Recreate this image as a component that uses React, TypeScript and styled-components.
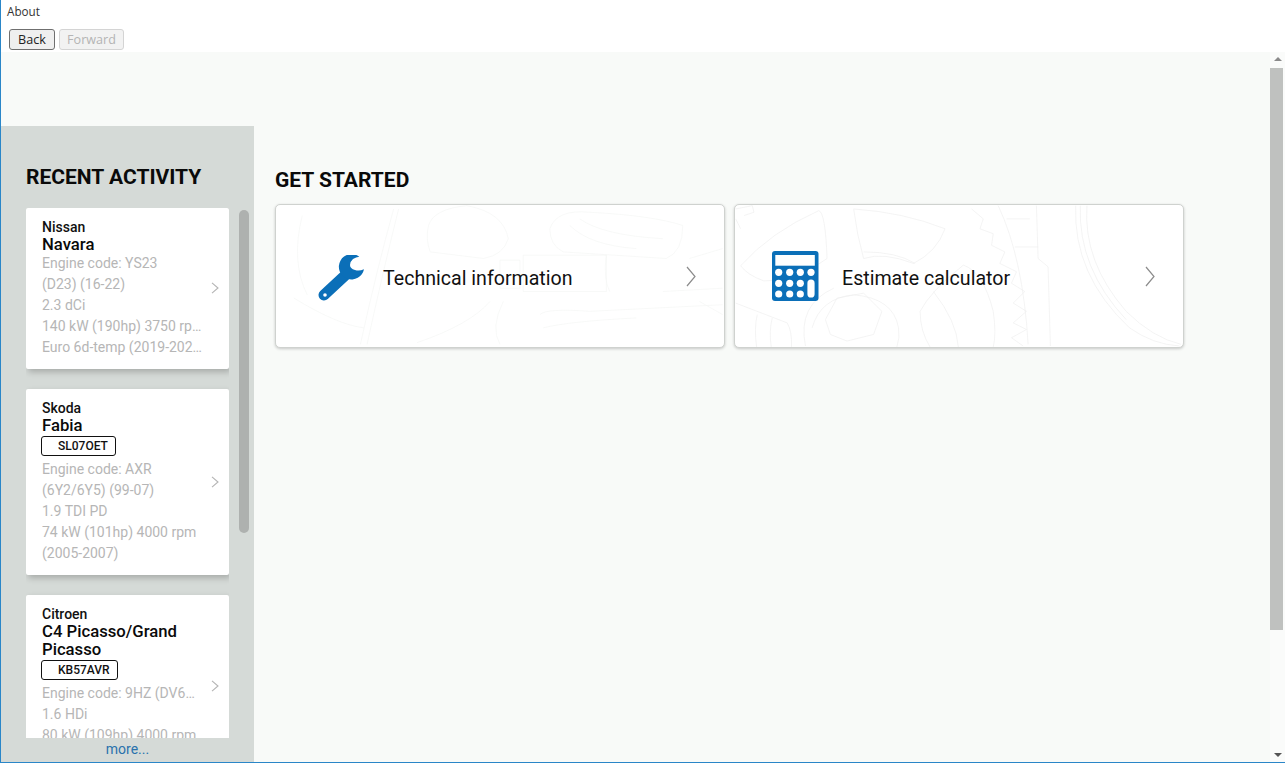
import React from 'react';
import styled, { createGlobalStyle } from 'styled-components';

const GlobalStyle = createGlobalStyle`
    html, body {
        margin: 0;
        padding: 0;
        background: #fff;
    }
    * {
        box-sizing: border-box;
    }
`;

const Window = styled.div`
    width: 1285px;
    height: 763px;
    display: flex;
    flex-direction: column;
    overflow: hidden;
    border-left: 1px solid #2a86c8;
    border-bottom: 1px solid #2a86c8;
    font-family: Roboto, "Liberation Sans", sans-serif;
`;

const TopBar = styled.div`
    height: 52px;
    flex: none;
    background: #fff;
    padding: 4px 0 0 6px;
    font-family: "Open Sans", "Liberation Sans", sans-serif;
`;

const MenuLabel = styled.div`
    font-size: 11.7px;
    line-height: 14px;
    color: #333;
`;

const NavRow = styled.div`
    display: flex;
    gap: 4px;
    margin: 11px 0 0 2px;
`;

const NavButton = styled.button<{ $width: number }>`
    width: ${props => props.$width}px;
    height: 21px;
    padding: 0;
    font-family: inherit;
    font-size: 12.6px;
    line-height: 17px;
    border-radius: 3px;
    border: 1px solid ${props => (props.disabled ? '#d4d4d4' : '#6f6f6f')};
    background: ${props => (props.disabled ? '#f2f2f2' : '#efefef')};
    color: ${props => (props.disabled ? '#b4b4b4' : '#222')};
`;

const Body = styled.div`
    flex: 1;
    min-height: 0;
    display: flex;
    background: #f8faf8;
`;

const Page = styled.div`
    flex: 1;
    min-width: 0;
    display: flex;
    padding-top: 74px;
`;

const Sidebar = styled.aside`
    width: 253px;
    flex: none;
    display: flex;
    flex-direction: column;
    background: #d5dad7;
    padding: 39px 0 0 25px;
`;

const Heading = styled.h2`
    margin: 0;
    font-size: 21px;
    line-height: 24px;
    font-weight: 700;
    color: #0a0a0a;
    white-space: nowrap;
`;

const ActivityRow = styled.div`
    margin-top: 19px;
    height: 530px;
    flex: none;
    display: flex;
    gap: 10px;
`;

const ActivityList = styled.div`
    width: 203px;
    height: 100%;
    overflow: hidden;
    display: flex;
    flex-direction: column;
    gap: 20px;
    padding-bottom: 20px;
`;

const ListTrack = styled.div`
    width: 10px;
    padding-top: 2px;
`;

const ListThumb = styled.div`
    height: 323px;
    border-radius: 5px;
    background: #aeb1af;
`;

const VehicleCard = styled.div`
    flex: none;
    display: flex;
    align-items: center;
    background: #fff;
    border-radius: 2px;
    padding: 12px 10px 11px 16px;
    box-shadow: 2px 3px 6px rgba(0, 0, 0, 0.22);
`;

const VehicleInfo = styled.div`
    width: 161px;
    flex: none;
`;

const Make = styled.div`
    font-size: 14px;
    line-height: 15px;
    font-weight: 500;
    color: #111;
`;

const Model = styled.div`
    margin: 1px 0 -1px;
    font-size: 16.7px;
    line-height: 18px;
    font-weight: 500;
    color: #0a0a0a;
`;

const Plate = styled.div`
    display: block;
    width: fit-content;
    height: 20px;
    margin: 2px 0 3px -1px;
    padding: 0 7px 0 16px;
    border: 1px solid #111;
    border-radius: 3px;
    font-size: 12px;
    line-height: 19px;
    font-weight: 500;
    color: #111;
`;

const Spec = styled.div`
    font-size: 14px;
    line-height: 21px;
    color: #b6b6b6;
    white-space: nowrap;
    overflow: hidden;
    text-overflow: ellipsis;
`;

const Chevron = styled.svg`
    flex: none;
    display: block;
`;

const CardChevron = styled(Chevron)`
    margin: 0 0 2px 8px;
`;

const MoreLink = styled.a`
    display: block;
    width: 203px;
    margin-top: 1px;
    text-align: center;
    font-size: 14px;
    line-height: 20px;
    color: #2a72ad;
`;

const Main = styled.main`
    flex: 1;
    min-width: 0;
    padding: 42px 0 0 21px;
`;

const TileRow = styled.div`
    margin-top: 12px;
    display: flex;
    gap: 9px;
`;

const Tile = styled.div`
    position: relative;
    width: 450px;
    height: 144px;
    display: flex;
    align-items: center;
    overflow: hidden;
    background: #fff;
    border: 1px solid #cfd2cf;
    border-radius: 5px;
    box-shadow: 0 1px 3px rgba(0, 0, 0, 0.2);
`;

const TileArt = styled.svg`
    position: absolute;
    inset: 0;
    width: 100%;
    height: 100%;
    pointer-events: none;
`;

const IconSlot = styled.div<{ $inset: number; $drop: number }>`
    position: relative;
    width: 107px;
    flex: none;
    padding: ${props => props.$drop}px 0 0 ${props => props.$inset}px;
`;

const TileIcon = styled.svg`
    display: block;
`;

const TileLabel = styled.div`
    position: relative;
    width: 303px;
    flex: none;
    padding-top: 5px;
    font-size: 19.6px;
    line-height: 24px;
    color: #111;
`;

const TileChevron = styled(Chevron)`
    position: relative;
`;

const PageScrollbar = styled.div`
    width: 15px;
    flex: none;
    display: flex;
    flex-direction: column;
    align-items: center;
    background: #fafbfa;
`;

const ArrowUp = styled.div`
    margin-top: 5px;
    width: 0;
    height: 0;
    border-left: 4px solid transparent;
    border-right: 4px solid transparent;
    border-bottom: 4px solid #8a8a8a;
`;

const PageThumb = styled.div`
    width: 13px;
    height: 562px;
    margin: 7px 2px 0 0;
    background: #bfc1bf;
`;

const ArrowDown = styled.div`
    margin-top: auto;
    margin-bottom: 5px;
    width: 0;
    height: 0;
    border-left: 4px solid transparent;
    border-right: 4px solid transparent;
    border-top: 4px solid #555;
`;

const vehicles = [
    {
        make: 'Nissan',
        model: 'Navara',
        specs: ['Engine code: YS23', '(D23) (16-22)', '2.3 dCi', '140 kW (190hp) 3750 rpm', 'Euro 6d-temp (2019-2022)'],
    },
    {
        make: 'Skoda',
        model: 'Fabia',
        plate: 'SL07OET',
        specs: ['Engine code: AXR', '(6Y2/6Y5) (99-07)', '1.9 TDI PD', '74 kW (101hp) 4000 rpm', '(2005-2007)'],
    },
    {
        make: 'Citroen',
        model: 'C4 Picasso/Grand Picasso',
        plate: 'KB57AVR',
        specs: ['Engine code: 9HZ (DV6TED4)', '1.6 HDi', '80 kW (109hp) 4000 rpm', '(2007-2010)'],
    },
];

const SmallChevron = () => (
    <CardChevron width="8" height="12" viewBox="0 0 8 12" fill="none" stroke="#b4b4b4" strokeWidth="1.1">
        <path d="M1 .8l6 5.2-6 5.2" />
    </CardChevron>
);

const BigChevron = () => (
    <TileChevron width="10" height="21" viewBox="0 0 10 21" fill="none" stroke="#8c8c8c" strokeWidth="1.2">
        <path d="M1 1l8 9.5L1 20" />
    </TileChevron>
);

const WrenchIcon = () => (
    <TileIcon width="47" height="47" viewBox="0 0 47 47" fill="none">
        <path d="M6 40L27 20.5" stroke="#0b6fb8" strokeWidth="11" strokeLinecap="round" />
        <path
            d="M41.3 1.7A12.7 12.7 0 1 0 46 14.3Q41 16.5 37 15Q32 13.5 32 10Q32.5 6 35 4Q38 2 41.3 1.7z"
            fill="#0b6fb8"
        />
        <circle cx="7" cy="40" r="1.8" fill="#fff" />
    </TileIcon>
);

const calcKeys = [
    [6.7, 21.3], [17.7, 21.3], [28.3, 21.3], [39, 21.3],
    [6.7, 32.3], [17.7, 32.3], [28.3, 32.3],
    [6.7, 43], [17.7, 43], [28.3, 43],
];

const CalculatorIcon = () => (
    <TileIcon width="47" height="50" viewBox="0 0 47 50">
        <rect width="46.5" height="50" rx="3" fill="#0b6fb8" />
        <rect x="3.3" y="4" width="39.5" height="10.7" fill="#fff" />
        {calcKeys.map(([cx, cy]) => <circle key={`${cx}-${cy}`} cx={cx} cy={cy} r="3.6" fill="#fff" />)}
        <rect x="35.4" y="28.5" width="7.2" height="18" rx="3.6" fill="#fff" />
    </TileIcon>
);

// the faint engine drawings behind the two tiles, in 3x crop coordinates
const EngineArt = () => (
    <TileArt viewBox="16 28 1348 430" preserveAspectRatio="none" fill="none" stroke="#f5f6f5" strokeWidth="2">
        <path d="M95 60Q60 200 110 300" />
        <path d="M370 40Q320 220 270 450M385 40Q340 220 290 450" />
        <path d="M475 90Q490 40 590 30Q700 50 715 130Q700 180 640 190L480 170Q465 130 475 90z" />
        <path d="M840 100Q860 40 960 50Q1150 60 1240 90Q1240 170 1190 190L880 170Q840 150 840 100z" />
        <path d="M900 90Q960 150 1100 160M930 70Q1000 120 1180 130" />
        <path d="M690 195H750V280H690zM760 180H1010V290H760zM1010 180Q1000 250 1020 290" />
        <path d="M70 310Q200 390 280 400M440 445Q600 390 660 320M700 320Q660 400 690 450" />
        <path d="M810 360Q830 340 960 350L1360 330M820 400Q900 380 1100 370M1290 320L1360 360" />
        <path d="M1260 190L1360 160M1180 290L1360 280" />
    </TileArt>
);

const GearArt = () => (
    <TileArt viewBox="13 28 1348 430" preserveAspectRatio="none" fill="none" stroke="#eeeeee" strokeWidth="2">
        <path d="M30 212Q120 110 265 45Q285 50 290 190Q200 260 100 258Q50 240 30 212z" />
        <path d="M370 40Q520 50 645 100Q620 170 550 205Q460 170 400 190Q380 120 370 40z" />
        <path d="M400 170Q500 170 555 205" />
        <path d="M725 40L760 70L750 100L790 115L785 150L825 170L810 205L860 230L845 265L885 290L850 325L890 350L850 385L890 405L845 430L880 455" />
        <path d="M805 30Q880 190 895 450" />
        <path d="M830 70H900M855 155H925" />
        <path d="M920 30L925 190L955 215L962 455" />
        <path d="M1038 30Q1030 240 1200 400Q1270 450 1350 455" />
        <path d="M1072 30Q1060 200 1190 350Q1270 430 1355 450" />
        <path d="M1052 30Q1045 220 1190 375" />
        <path d="M285 375L320 310L400 295L455 350L430 420L350 440L300 420z" />
        <path d="M245 400Q270 310 370 300Q490 310 505 400Q510 430 500 458M225 455Q200 330 310 280" />
        <path d="M570 350Q600 290 700 210Q760 230 790 350Q800 420 790 458M570 350Q570 410 600 458" />
        <path d="M610 290Q680 380 685 458" />
        <path d="M15 325L170 385Q185 410 183 458M80 360Q70 400 78 458M125 370Q115 410 122 458" />
        <path d="M15 40L65 30L70 50L40 60M15 70L30 100" />
    </TileArt>
);

export default function App() {
    return (
        <>
            <GlobalStyle />
            <Window>
                <TopBar>
                    <MenuLabel>About</MenuLabel>
                    <NavRow>
                        <NavButton $width={46}>Back</NavButton>
                        <NavButton $width={65} disabled>Forward</NavButton>
                    </NavRow>
                </TopBar>
                <Body>
                    <Page>
                        <Sidebar>
                            <Heading>RECENT ACTIVITY</Heading>
                            <ActivityRow>
                                <ActivityList>
                                    {vehicles.map(vehicle => (
                                        <VehicleCard key={vehicle.make}>
                                            <VehicleInfo>
                                                <Make>{vehicle.make}</Make>
                                                <Model>{vehicle.model}</Model>
                                                {vehicle.plate ? <Plate>{vehicle.plate}</Plate> : null}
                                                {vehicle.specs.map(spec => <Spec key={spec}>{spec}</Spec>)}
                                            </VehicleInfo>
                                            <SmallChevron />
                                        </VehicleCard>
                                    ))}
                                </ActivityList>
                                <ListTrack>
                                    <ListThumb />
                                </ListTrack>
                            </ActivityRow>
                            <MoreLink>more...</MoreLink>
                        </Sidebar>
                        <Main>
                            <Heading>GET STARTED</Heading>
                            <TileRow>
                                <Tile>
                                    <EngineArt />
                                    <IconSlot $inset={42} $drop={4}><WrenchIcon /></IconSlot>
                                    <TileLabel>Technical information</TileLabel>
                                    <BigChevron />
                                </Tile>
                                <Tile>
                                    <GearArt />
                                    <IconSlot $inset={37} $drop={0}><CalculatorIcon /></IconSlot>
                                    <TileLabel>Estimate calculator</TileLabel>
                                    <BigChevron />
                                </Tile>
                            </TileRow>
                        </Main>
                    </Page>
                    <PageScrollbar>
                        <ArrowUp />
                        <PageThumb />
                        <ArrowDown />
                    </PageScrollbar>
                </Body>
            </Window>
        </>
    );
}
